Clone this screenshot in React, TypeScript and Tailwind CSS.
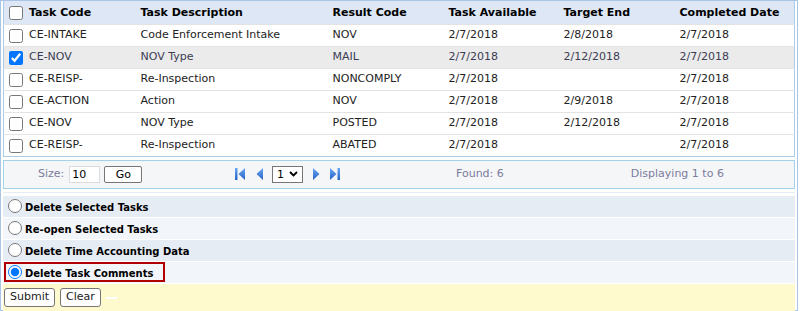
import React from 'react'

// Task list with bulk actions
type Row = {
  code: string
  desc: string
  result: string
  avail: string
  target: string
  done: string
  checked?: boolean
}

const rows: Row[] = [
  { code: 'CE-INTAKE', desc: 'Code Enforcement Intake', result: 'NOV', avail: '2/7/2018', target: '2/8/2018', done: '2/7/2018' },
  { code: 'CE-NOV', desc: 'NOV Type', result: 'MAIL', avail: '2/7/2018', target: '2/12/2018', done: '2/7/2018', checked: true },
  { code: 'CE-REISP-', desc: 'Re-Inspection', result: 'NONCOMPLY', avail: '2/7/2018', target: '', done: '2/7/2018' },
  { code: 'CE-ACTION', desc: 'Action', result: 'NOV', avail: '2/7/2018', target: '2/9/2018', done: '2/7/2018' },
  { code: 'CE-NOV', desc: 'NOV Type', result: 'POSTED', avail: '2/7/2018', target: '2/12/2018', done: '2/7/2018' },
  { code: 'CE-REISP-', desc: 'Re-Inspection', result: 'ABATED', avail: '2/7/2018', target: '', done: '2/7/2018' },
]

const actions = [
  'Delete Selected Tasks',
  'Re-open Selected Tasks',
  'Delete Time Accounting Data',
  'Delete Task Comments',
]

function Tri({ dir, bar }: { dir: 'l' | 'r'; bar?: boolean }) {
  return (
    <svg width="10" height="14" viewBox="0 0 10 14">
      <defs>
        <linearGradient id={'g' + dir} x1="0" y1="0" x2="0" y2="1">
          <stop offset="0" stopColor="#6aa6f0" />
          <stop offset="1" stopColor="#2463c9" />
        </linearGradient>
      </defs>
      {dir === 'l' ? (
        <>
          {bar && <rect x="0" y="1" width="2.5" height="12" fill={'url(#g' + dir + ')'} />}
          <polygon points={bar ? '10,1 3.5,7 10,13' : '8,1 1.5,7 8,13'} fill={'url(#g' + dir + ')'} />
        </>
      ) : (
        <>
          <polygon points={bar ? '0,1 6.5,7 0,13' : '2,1 8.5,7 2,13'} fill={'url(#g' + dir + ')'} />
          {bar && <rect x="7.5" y="1" width="2.5" height="12" fill={'url(#g' + dir + ')'} />}
        </>
      )}
    </svg>
  )
}

export default function App() {
  return (
    <div className="w-[798px] h-[311px] border border-[#a9c5e3] px-[2px] bg-white font-['DejaVu_Sans',sans-serif] text-[11px] text-[#222]">
      {/* Grid */}
      <table className="w-full table-fixed border-collapse border border-t-0 border-[#a9cbe6]">
        <colgroup>
          <col className="w-[133px]" />
          <col className="w-[192px]" />
          <col className="w-[116px]" />
          <col className="w-[115px]" />
          <col className="w-[116px]" />
          <col />
        </colgroup>
        <thead>
          <tr className="h-[23px] bg-[#dde7f5] text-black">
            <th className="text-left font-bold pl-[5px] pt-[1px]">
              <div className="flex items-center gap-[6px]">
                <input type="checkbox" className="m-0 w-[14px] h-[14px]" />
                <span>Task Code</span>
              </div>
            </th>
            <th className="text-left font-bold pl-[4px] pt-[1px]">Task Description</th>
            <th className="text-left font-bold pl-[4px] pt-[1px]">Result Code</th>
            <th className="text-left font-bold pl-[4px] pt-[1px]">Task Available</th>
            <th className="text-left font-bold pl-[4px] pt-[1px]">Target End</th>
            <th className="text-left font-bold pl-[4px] pt-[1px]">Completed Date</th>
          </tr>
        </thead>
        <tbody>
          {rows.map((r, i) => (
            <tr
              key={i}
              className={
                'h-[22px] border-t border-[#e3e3e3] ' +
                (r.checked ? 'bg-[#ebebeb] text-[#3c3c55]' : 'bg-white')
              }
            >
              <td className="pl-[5px] pt-[1px]">
                <div className="flex items-center gap-[6px]">
                  <input type="checkbox" defaultChecked={r.checked} className="m-0 w-[14px] h-[14px]" />
                  <span>{r.code}</span>
                </div>
              </td>
              <td className="pl-[4px] pt-[1px]">{r.desc}</td>
              <td className="pl-[4px] pt-[1px]">{r.result}</td>
              <td className="pl-[4px] pt-[1px]">{r.avail}</td>
              <td className="pl-[4px] pt-[1px]">{r.target}</td>
              <td className="pl-[4px] pt-[1px]">{r.done}</td>
            </tr>
          ))}
        </tbody>
      </table>

      {/* Pager */}
      <div className="mt-[3px] h-[29px] border border-[#a5d1e8] bg-[#f5f6f8] flex items-center text-[#7b7b9c]">
        <div className="w-[228px] flex items-center">
          <span className="ml-[34px]">Size:</span>
          <input
            defaultValue="10"
            className="ml-[5px] w-[31px] h-[17px] bg-white border border-[#dcdcdc] px-[2px] text-[11px] text-black outline-none"
          />
          <button className="ml-[4px] w-[38px] h-[17px] bg-white border border-[#767676] rounded-[2px] text-[11px] leading-none text-black">
            Go
          </button>
        </div>
        <div className="flex items-center">
          <span className="ml-[3px]"><Tri dir="l" bar /></span>
          <span className="ml-[10px]"><Tri dir="l" /></span>
          <div className="ml-[7px] w-[31px] h-[17px] border border-[#767676] bg-white flex items-center justify-between px-[4px] text-black">
            <span className="leading-none">1</span>
            <svg width="9" height="6" viewBox="0 0 9 6">
              <polyline points="1,1 4.5,4.5 8,1" fill="none" stroke="#000" strokeWidth="1.8" />
            </svg>
          </div>
          <span className="ml-[8px]"><Tri dir="r" /></span>
          <span className="ml-[9px]"><Tri dir="r" bar /></span>
        </div>
        <span className="ml-[116px]">Found: 6</span>
        <span className="ml-[127px]">Displaying 1 to 6</span>
      </div>

      {/* Actions */}
      <div className="mt-[3px] border-t border-[#e4edf4] pt-[3px] flex flex-col gap-[1px] text-[10px] font-bold text-black">
        {actions.map((a, i) => (
          <div key={a} className={'h-[21px] flex items-center ' + (i % 2 === 0 ? 'bg-[#e5ecf4]' : 'bg-[#f2f6fa]')}>
            <label
              className={
                'flex items-center h-[20px] ml-[1px] pl-[2px] whitespace-nowrap border-2 ' +
                (i === 3 ? 'border-[#b00000] w-[161px]' : 'border-transparent')
              }
            >
              <input type="radio" name="act" defaultChecked={i === 3} className="m-0 w-[14px] h-[14px]" />
              <span className="ml-[3px] pt-[2px]">{a}</span>
            </label>
          </div>
        ))}
        <div className="h-[28px] bg-[#fffacd] flex items-center gap-[5px] pl-[1px] font-normal text-[11px]">
          <button className="h-[19px] px-[5px] bg-white border border-[#767676] rounded-[3px] text-[#222]">Submit</button>
          <button className="h-[19px] px-[5px] bg-white border border-[#767676] rounded-[3px] text-[#222]">Clear</button>
          <span className="w-[11px] h-[2px] bg-white" />
        </div>
      </div>
    </div>
  )
}
